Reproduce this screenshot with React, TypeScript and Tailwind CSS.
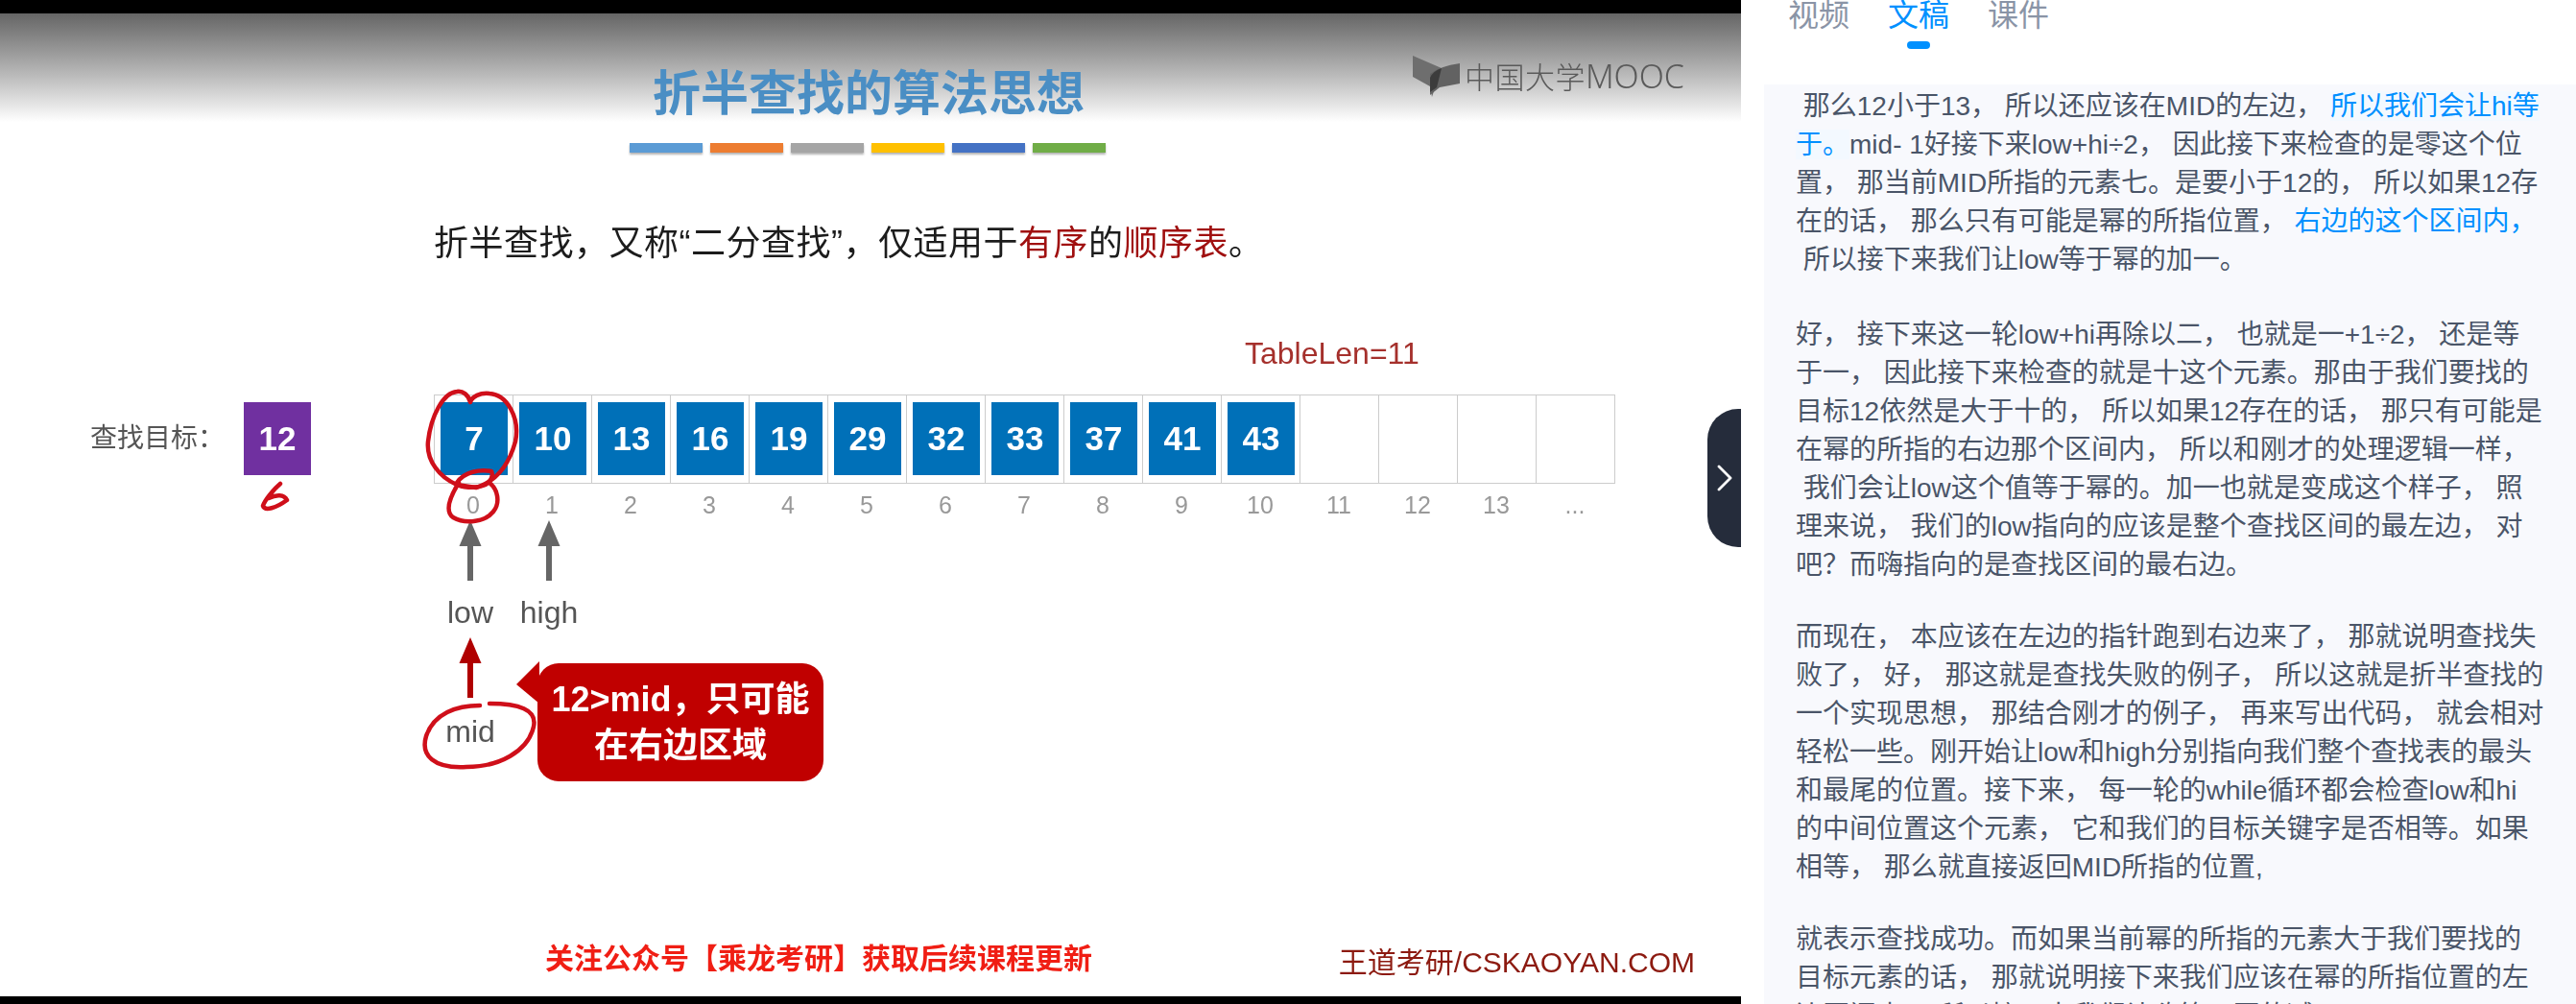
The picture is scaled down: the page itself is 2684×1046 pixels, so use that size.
import React from 'react';
import { ChevronRight } from 'lucide-react';

const titleBars = ['bg-[#5b9bd5]', 'bg-[#ed7d31]', 'bg-[#a5a5a5]', 'bg-[#ffc000]', 'bg-[#4472c4]', 'bg-[#70ad47]'];
const values = [7, 10, 13, 16, 19, 29, 32, 33, 37, 41, 43];
const indexes = ['0', '1', '2', '3', '4', '5', '6', '7', '8', '9', '10', '11', '12', '13', '...'];

function Arrow({ color, height }: { color: string; height: number }) {
  return (
    <svg width="24" height={height} viewBox={`0 0 24 ${height}`}>
      <path d={`M12 0 L23.5 27 L15 27 L15 ${height} L9 ${height} L9 27 L0.5 27 Z`} fill={color} />
    </svg>
  );
}

function Slide() {
  return (
    <div className="h-[1024px] bg-white blur-[0.5px] flex flex-col font-['Liberation_Sans','Noto_Sans_CJK_SC',sans-serif]">
      {/* Title band */}
      <div className="h-[113px] shrink-0 bg-gradient-to-b from-[#666666] to-white flex items-start justify-between pl-[680px] pr-[59px]">
        <h1 className="pt-[57px] text-[50px] leading-[54px] font-bold text-[#4a8ec4]">折半查找的算法思想</h1>
        <div className="pt-[43px] flex items-center gap-[4px]">
          <svg width="50" height="44" viewBox="0 0 50 44">
            <path d="M0 1 L30 14 L20 44 L18 33 L0 23 Z" fill="#6e6e6e" />
            <path d="M18 20 Q28 12 49 9 L49 30 L28 34 L18 42 Z" fill="#626262" />
            <path d="M18 24 Q21 17 30 14 L25 34 L18 39 Z" fill="#3c3c3c" />
          </svg>
          <span className="text-[31px] leading-[36px] text-[#5a5a5a] tracking-[0.5px] font-['Noto_Sans_CJK_SC',sans-serif] font-light">中国大学</span>
          <span className="-ml-[4px] text-[34px] leading-[36px] text-[#5a5a5a] font-['Noto_Sans',sans-serif] font-light">MOOC</span>
        </div>
      </div>

      <div className="mt-[22px] pl-[656px] flex gap-[8px]">
        {titleBars.map((bar) => (
          <div key={bar} className={`w-[76px] h-[10px] ${bar} shadow-[0_2px_2px_rgba(0,0,0,0.3)]`} />
        ))}
      </div>

      <p className="mt-[72px] pl-[452px] text-[36px] leading-[46px] tracking-[0.5px] text-[#1c1c1c]">
        折半查找，又称“二分查找”，仅适用于<span className="text-[#a01010]">有序</span>的<span className="text-[#a01010]">顺序表</span>。
      </p>

      {/* Diagram */}
      <div className="relative">
        <div className="mt-[73px] pl-[1297px] text-[32px] leading-[36px] text-[#a5302c]">TableLen=11</div>

        <div className="mt-[25px] pl-[94px] flex items-start">
          <span className="w-[160px] pt-[28px] text-[28px] leading-[36px] text-[#555555]">查找目标：</span>
          <div className="mt-[8px] w-[70px] h-[76px] bg-[#7030a0] flex items-center justify-center text-[35px] font-bold text-white">12</div>
          <div className="ml-[128px] flex border-l border-[#cccccc]">
            {indexes.map((n, i) => (
              <div key={n} className="w-[82px] h-[93px] border-y border-r border-[#cccccc] pl-[6px] pt-[7px]">
                {i < values.length && (
                  <div className="w-[70px] h-[76px] bg-[#0070b8] flex items-center justify-center text-[35px] font-bold text-white">
                    {values[i]}
                  </div>
                )}
              </div>
            ))}
          </div>
        </div>

        <div className="mt-[7px] pl-[452px] flex">
          {indexes.map((n) => (
            <span key={n} className="w-[82px] text-center text-[25px] leading-[30px] text-[#999999]">{n}</span>
          ))}
        </div>

        {/* Pointers */}
        <div className="mt-[1px] pl-[449px] flex">
          <div className="w-[82px] flex justify-center"><Arrow color="#666666" height={63} /></div>
          <div className="w-[82px] flex justify-center"><Arrow color="#666666" height={63} /></div>
        </div>
        <div className="mt-[14px] pl-[449px] flex text-[32px] leading-[38px] text-[#555555]">
          <span className="w-[82px] text-center">low</span>
          <span className="w-[82px] text-center">high</span>
        </div>

        <div className="pl-[449px] flex items-start">
          <div className="w-[82px] pt-[7px] flex flex-col items-center gap-[16px]">
            <Arrow color="#b00000" height={63} />
            <span className="text-[32px] leading-[38px] text-[#555555]">mid</span>
          </div>
          {/* Callout */}
          <div className="relative mt-[34px] ml-[29px] w-[298px] h-[123px] rounded-[22px] bg-[#c00000] text-white text-[36px] leading-[48px] font-bold text-center pt-[14px]">
            <div>12&gt;mid，只可能</div>
            <div>在右边区域</div>
            <svg className="absolute -left-[24px] -top-[2px]" width="28" height="44" viewBox="0 0 28 44">
              <path d="M26 0 L2 24 L26 44 Z" fill="#c00000" />
            </svg>
          </div>
        </div>

        {/* Pen marks */}
        <svg className="absolute left-0 top-[18px]" width="1000" height="560" viewBox="0 0 1000 560" fill="none" stroke="#cf0f1a" strokeWidth="4.5" strokeLinecap="round" strokeLinejoin="round">
          <path d="M490 124 C488 116 482 112 476 113 C462 114 449 138 446 165 C444 185 458 202 476 210 L496 213 C516 207 530 190 537 165 C542 140 528 116 510 115 C500 114 492 118 490 124 Z" />
          <path d="M512 196 C500 194 484 196 476 208 C478 214 496 214 506 210 C512 206 514 200 512 196" />
          <path d="M478 208 C468 224 464 238 472 244 C486 252 506 248 514 238 C522 228 518 214 510 208" />
          <path d="M292 209 C284 216 276 226 274 232 C276 238 288 234 299 226 C296 220 288 220 280 224" />
          <path d="M500 440 C476 440 452 448 444 472 C438 492 452 506 486 504 C520 504 550 488 556 462 C560 444 540 438 510 438" />
        </svg>
      </div>

      {/* Footer texts */}
      <div className="mt-auto pl-[568px] pr-[48px] pb-[18px] flex items-end justify-between">
        <span className="mb-[4px] text-[30px] leading-[34px] font-bold text-[#f01e14]">关注公众号【乘龙考研】获取后续课程更新</span>
        <span className="text-[30px] leading-[34px] text-[#8c1a10]">王道考研/CSKAOYAN.COM</span>
      </div>
    </div>
  );
}

function Highlight({ children }: { children: React.ReactNode }) {
  return <span className="text-[#0090ff] bg-[#f3f9ff]">{children}</span>;
}

export default function App() {
  return (
    <div className="h-[1046px] w-[2684px] bg-white flex overflow-hidden font-['Liberation_Sans','Noto_Sans_CJK_SC',sans-serif]">
      {/* Video */}
      <div className="w-[1814px] shrink-0 relative bg-black pt-[14px] pb-[8px] overflow-hidden">
        <Slide />
        <button className="absolute right-0 top-[426px] w-[35px] h-[144px] rounded-l-[32px] bg-[#252c3b] flex items-center justify-center text-white">
          <ChevronRight size={48} strokeWidth={1.4} className="shrink-0" />
        </button>
      </div>

      {/* Side panel */}
      <div className="flex-1 min-w-0">
        <div className="h-[88px] pl-[49px] flex gap-[40px] text-[32px] leading-[32px] text-[#8a94a6]">
          <span>视频</span>
          <span className="relative text-[#0090ff] h-fit">
            文稿
            <span className="absolute left-[20px] top-[43px] w-[24px] h-[8px] rounded-full bg-[#0090ff]" />
          </span>
          <span>课件</span>
        </div>
        <div className="h-[958px] ml-[24px] pl-[33px] pt-[3px] bg-[#f8f9fd] text-[28px] leading-[40px] text-[#4a5568] overflow-hidden">
          <div className="mb-[38px]">
            <div>&nbsp;那么12小于13， 所以还应该在MID的左边， <Highlight>所以我们会让hi等</Highlight></div>
            <div><Highlight>于。</Highlight>mid- 1好接下来low+hi÷2， 因此接下来检查的是零这个位</div>
            <div>置， 那当前MID所指的元素七。是要小于12的， 所以如果12存</div>
            <div>在的话， 那么只有可能是幂的所指位置， <span className="text-[#0090ff]">右边的这个区间内，</span></div>
            <div>&nbsp;所以接下来我们让low等于幂的加一。</div>
          </div>
          <div className="mb-[35px]">
            <div>好， 接下来这一轮low+hi再除以二， 也就是一+1÷2， 还是等</div>
            <div>于一， 因此接下来检查的就是十这个元素。那由于我们要找的</div>
            <div>目标12依然是大于十的， 所以如果12存在的话， 那只有可能是</div>
            <div>在幂的所指的右边那个区间内， 所以和刚才的处理逻辑一样，</div>
            <div>&nbsp;我们会让low这个值等于幂的。加一也就是变成这个样子， 照</div>
            <div>理来说， 我们的low指向的应该是整个查找区间的最左边， 对</div>
            <div>吧？而嗨指向的是查找区间的最右边。</div>
          </div>
          <div className="mb-[35px]">
            <div>而现在， 本应该在左边的指针跑到右边来了， 那就说明查找失</div>
            <div>败了， 好， 那这就是查找失败的例子， 所以这就是折半查找的</div>
            <div>一个实现思想， 那结合刚才的例子， 再来写出代码， 就会相对</div>
            <div>轻松一些。刚开始让low和high分别指向我们整个查找表的最头</div>
            <div>和最尾的位置。接下来， 每一轮的while循环都会检查low和hi</div>
            <div>的中间位置这个元素， 它和我们的目标关键字是否相等。如果</div>
            <div>相等， 那么就直接返回MID所指的位置,</div>
          </div>
          <div>
            <div>就表示查找成功。而如果当前幂的所指的元素大于我们要找的</div>
            <div>目标元素的话， 那就说明接下来我们应该在幂的所指位置的左</div>
            <div>边区间内， 所以接下来我们让嗨等于幂的减一。</div>
          </div>
        </div>
      </div>
    </div>
  );
}
